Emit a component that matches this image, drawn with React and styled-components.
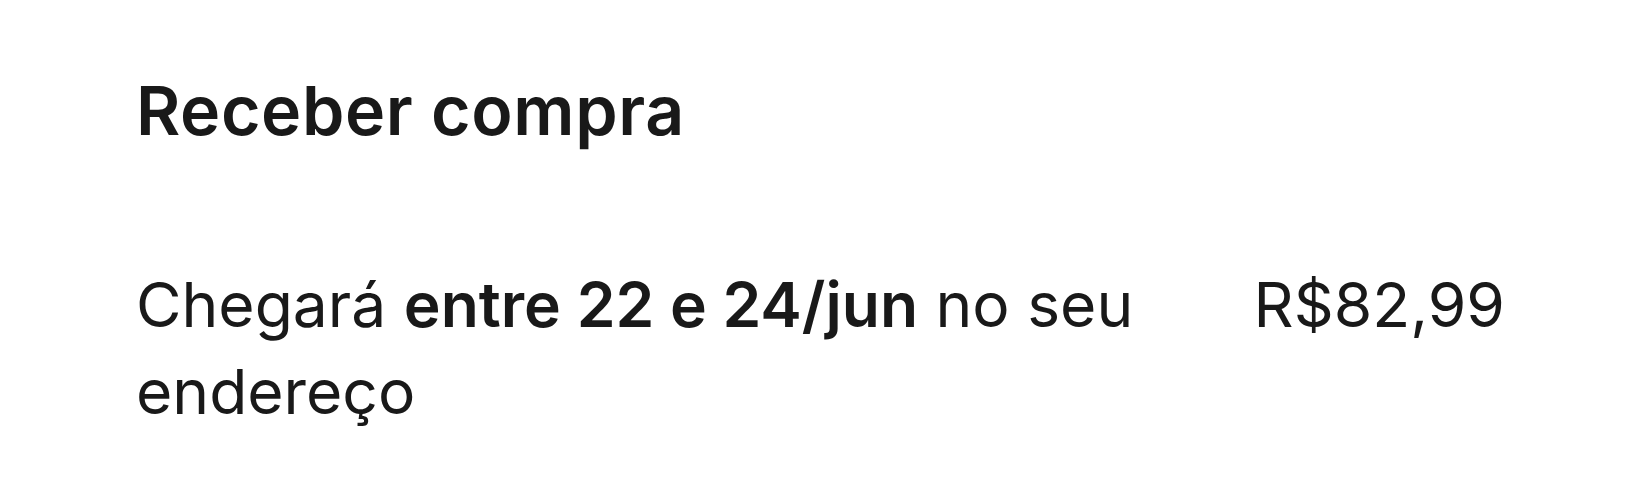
import React from "react";
import styled, { createGlobalStyle } from "styled-components";

const Global = createGlobalStyle`
  body {
    margin: 0;
    background: #fff;
    color: #191919;
    font-family: "Inter", "Open Sans", sans-serif;
  }
`;

const Section = styled.section`
  padding: 70px 137px 0 136px;
`;

const Title = styled.h2`
  margin: 0;
  font-size: 68px;
  font-weight: 600;
  line-height: 80px;
  letter-spacing: 0.6px;
`;

const Row = styled.div`
  display: flex;
  justify-content: space-between;
  align-items: flex-start;
  gap: 64px;
  margin-top: 111px;
  font-size: 62.3px;
  line-height: 87px;
`;

const Delivery = styled.p`
  flex: 1;
  margin: 0;

  strong {
    font-weight: 600;
  }
`;

const Price = styled.span`
  white-space: nowrap;
`;

export default function App() {
  return (
    <>
      <Global />
      <Section>
        <Title>Receber compra</Title>
        <Row>
          <Delivery>
            Chegará <strong>entre 22 e 24/jun</strong> no seu endereço
          </Delivery>
          <Price>R$82,99</Price>
        </Row>
      </Section>
    </>
  );
}
